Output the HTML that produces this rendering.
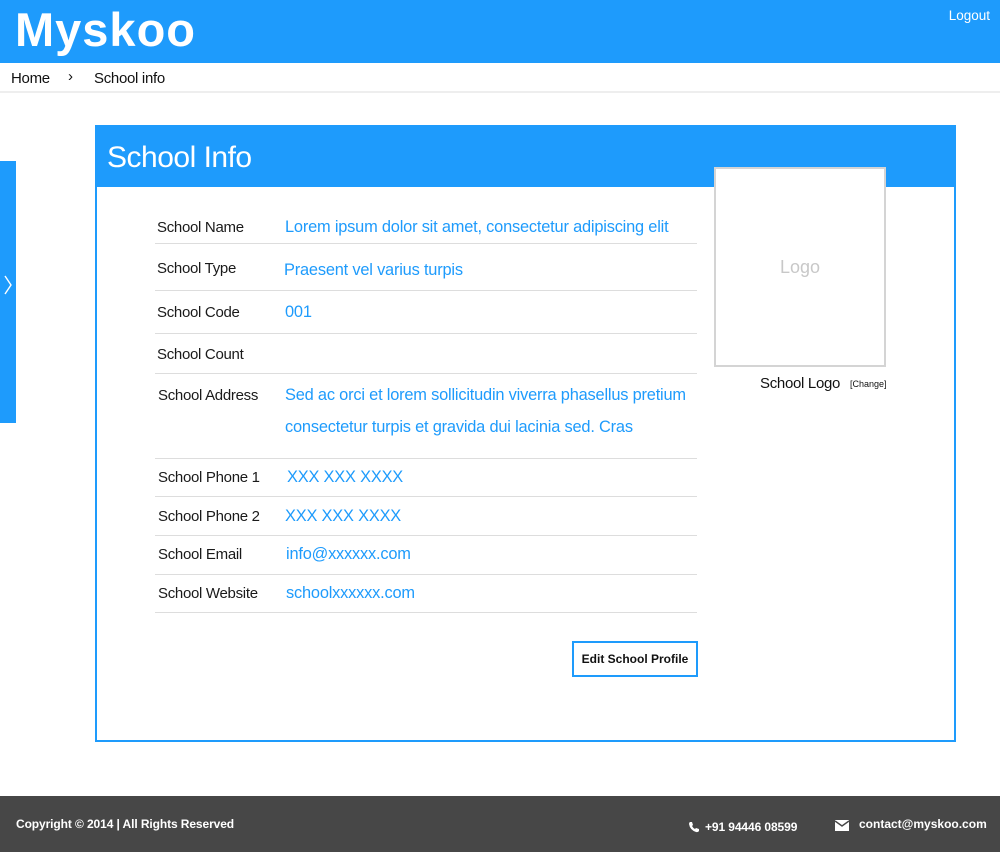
<!DOCTYPE html>
<html><head><meta charset="utf-8"><style>
*{margin:0;padding:0;box-sizing:border-box}
body{width:1000px;height:852px;position:relative;background:#fff;font-family:"Liberation Sans",Arial,sans-serif;overflow:hidden;color:#111}
.a{position:absolute;white-space:nowrap}
.hdr{left:0;top:0;width:1000px;height:63px;background:#1e9bfc}
.logo{left:15px;top:5px;font-size:47px;line-height:50px;font-weight:bold;color:#fff;letter-spacing:1px}
.lbl{left:157px;font-size:15px;color:#1a1a1a;letter-spacing:-0.3px}
.val{left:285px;font-size:16.4px;color:#1e9bfc;letter-spacing:-0.2px}
.ln{left:155px;width:542px;height:1px;background:#ddd}
</style></head><body>
<div class="a hdr"></div>
<div class="a logo">Myskoo</div>
<div class="a" style="right:10px;top:8px;color:#fff;font-size:13.5px">Logout</div>
<div class="a" style="left:11px;top:70px;font-size:15px;letter-spacing:-0.3px">Home</div>
<div class="a" style="left:68px;top:68px;font-size:15px">›</div>
<div class="a" style="left:94px;top:70px;font-size:15px;letter-spacing:-0.3px">School info</div>
<div class="a" style="left:0;top:91px;width:1000px;height:2px;background:#eee"></div>

<div class="a" style="left:0;top:161px;width:16px;height:262px;background:#1e9bfc"></div>
<svg class="a" style="left:3px;top:274px" width="10" height="22"><path d="M2 2 L8 11 L2 20" stroke="#fff" stroke-width="1.4" fill="none"/></svg>

<div class="a" style="left:95px;top:125px;width:861px;height:617px;border:2px solid #1e9bfc"></div>
<div class="a" style="left:95px;top:125px;width:861px;height:62px;background:#1e9bfc"></div>
<div class="a" style="left:107px;top:141px;font-size:30px;color:#fff;letter-spacing:-0.5px">School Info</div>

<div class="a" style="left:714px;top:167px;width:172px;height:200px;background:#fff;border:2px solid #d4d4d4"></div>
<div class="a" style="left:780px;top:257px;font-size:18px;color:#c8c8c8">Logo</div>
<div class="a" style="left:760px;top:375px;font-size:15px;letter-spacing:-0.3px">School Logo</div>
<div class="a" style="left:850px;top:379px;font-size:9px">[Change]</div>

<div class="a lbl" style="top:219px">School Name</div><div class="a val" style="top:218px">Lorem ipsum dolor sit amet, consectetur adipiscing elit</div>
<div class="a ln" style="top:243px"></div>
<div class="a lbl" style="top:260px">School Type</div><div class="a val" style="top:261px;left:284px">Praesent vel varius turpis</div>
<div class="a ln" style="top:290px"></div>
<div class="a lbl" style="top:304px">School Code</div><div class="a val" style="top:303px">001</div>
<div class="a ln" style="top:333px"></div>
<div class="a lbl" style="top:346px">School Count</div>
<div class="a ln" style="top:373px"></div>
<div class="a lbl" style="top:387px;left:158px">School Address</div><div class="a val" style="top:386px">Sed ac orci et lorem sollicitudin viverra phasellus pretium</div>
<div class="a val" style="top:418px">consectetur turpis et gravida dui lacinia sed. Cras</div>
<div class="a ln" style="top:458px"></div>
<div class="a lbl" style="top:469px;left:158px">School Phone 1</div><div class="a val" style="top:468px;left:287px">XXX XXX XXXX</div>
<div class="a ln" style="top:496px"></div>
<div class="a lbl" style="top:508px;left:158px">School Phone 2</div><div class="a val" style="top:507px">XXX XXX XXXX</div>
<div class="a ln" style="top:535px"></div>
<div class="a lbl" style="top:546px;left:158px">School Email</div><div class="a val" style="top:545px;left:286px">info@xxxxxx.com</div>
<div class="a ln" style="top:574px"></div>
<div class="a lbl" style="top:585px;left:158px">School Website</div><div class="a val" style="top:584px;left:286px">schoolxxxxxx.com</div>
<div class="a ln" style="top:612px"></div>

<div class="a" style="left:572px;top:641px;width:126px;height:36px;border:2px solid #1e9bfc;font-size:12px;font-weight:bold;text-align:center;line-height:32px">Edit School Profile</div>

<div class="a" style="left:0;top:796px;width:1000px;height:56px;background:#474747"></div>
<div class="a" style="left:16px;top:817px;font-size:12px;font-weight:bold;color:#fff;letter-spacing:-0.1px">Copyright © 2014 | All Rights Reserved</div>
<svg class="a" style="left:688px;top:821px" width="12" height="12" viewBox="0 0 12 12"><path d="M2 1 L4 1 L5 4 L4 5 Q5 7 7 8 L8 7 L11 8 L11 10 Q10 11.5 8 11 Q2 9 1 3 Q1 1.5 2 1Z" fill="#fff"/></svg>
<div class="a" style="left:705px;top:820px;font-size:12px;font-weight:bold;color:#fff;letter-spacing:-0.1px">+91 94446 08599</div>
<svg class="a" style="left:835px;top:820px" width="14" height="11" viewBox="0 0 14 11"><rect x="0" y="0" width="14" height="11" fill="#fff"/><path d="M0 1 L7 6 L14 1" stroke="#474747" stroke-width="1.5" fill="none"/></svg>
<div class="a" style="left:859px;top:817px;font-size:12px;font-weight:bold;color:#fff;letter-spacing:0px">contact@myskoo.com</div>
</body></html>
